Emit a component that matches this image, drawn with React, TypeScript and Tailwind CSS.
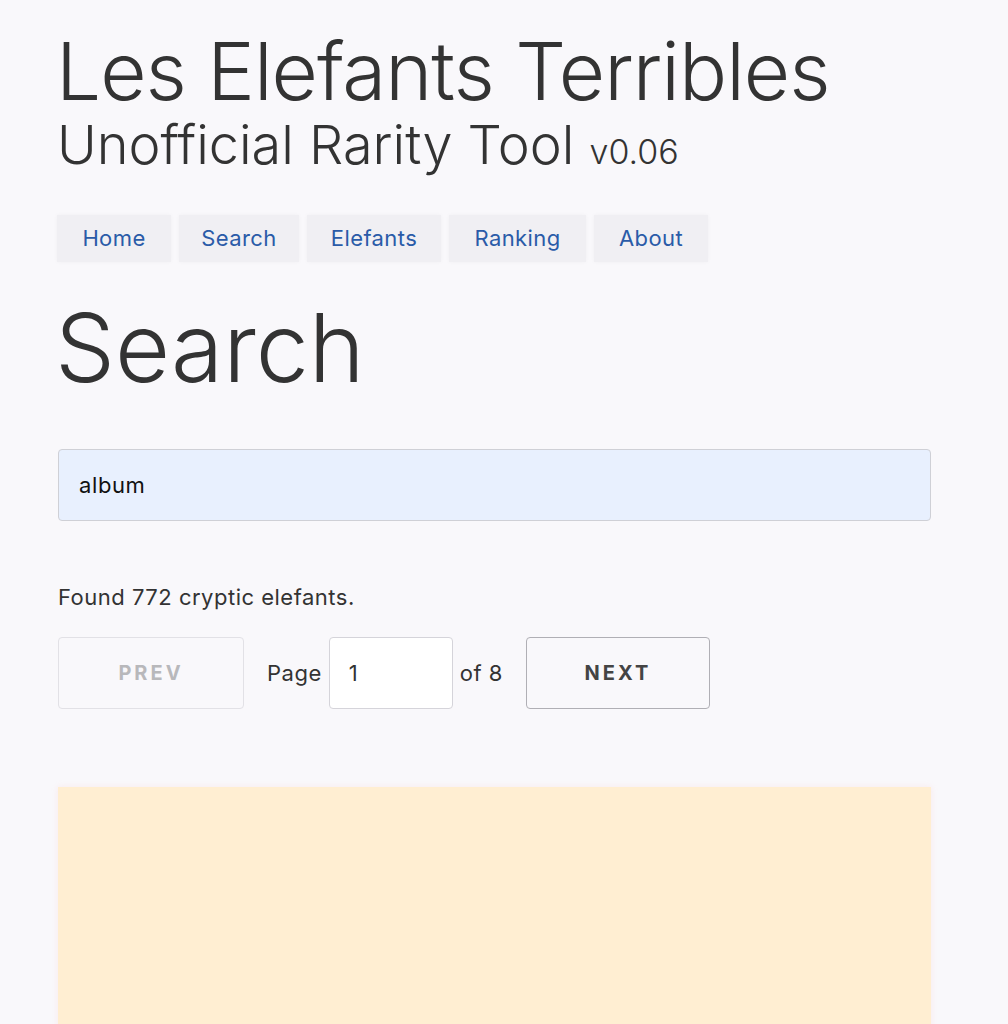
import React from 'react'

const navItems = [
  { label: 'Home', w: 'w-[114px]' },
  { label: 'Search', w: 'w-[120px]' },
  { label: 'Elefants', w: 'w-[134px]' },
  { label: 'Ranking', w: 'w-[137px]' },
  { label: 'About', w: 'w-[114px]' },
]

const App: React.FC = () => {
  return (
    <div className="min-h-screen bg-[#f9f8fb] text-[#333] font-['Inter',sans-serif]">
      <div className="w-[873px] ml-[58px] pt-[27px]">
        {/* Header */}
        <h1 className="text-[80px] font-light leading-[88px] tracking-[-1px] -ml-[2px]">Les Elefants Terribles</h1>
        <h2 className="text-[54px] font-light leading-[60px] -ml-[1px]">
          Unofficial Rarity Tool <span className="text-[34px]">v0.06</span>
        </h2>

        {/* Nav */}
        <nav className="flex gap-[8px] mt-[33px] -ml-[1px]">
          {navItems.map((item) => (
            <a
              key={item.label}
              href="#"
              className={`${item.w} h-[47px] flex items-center justify-center bg-[#f0eff3] shadow-[0_0_4px_rgba(0,0,0,0.04)] text-[22px] tracking-[0.4px] text-[#2a5ba8]`}
            >
              {item.label}
            </a>
          ))}
        </nav>

        <h1 className="text-[95px] font-light leading-[120px] mt-[26px] -ml-[3px]">Search</h1>

        {/* Search box */}
        <input
          type="text"
          defaultValue="album"
          className="mt-[41px] w-full h-[72px] px-[20px] bg-[#e8f0fe] border border-[#cfd0d6] rounded-[4px] text-[22px] tracking-[0.6px] text-[#111] outline-none"
        />

        <p className="mt-[62px] text-[22px] leading-[28px] tracking-[0.5px]">Found 772 cryptic elefants.</p>

        {/* Pager */}
        <div className="flex items-center mt-[26px]">
          <button className="w-[186px] h-[72px] border border-[#e2e1e6] rounded-[4px] text-[20px] font-bold tracking-[3px] text-[#b8b8bb]">
            PREV
          </button>
          <span className="ml-[23px] text-[22px] tracking-[0.5px]">Page</span>
          <input
            type="text"
            defaultValue="1"
            className="ml-[7px] w-[124px] h-[72px] px-[19px] bg-white border border-[#d5d4da] rounded-[4px] text-[22px] outline-none"
          />
          <span className="ml-[7px] text-[22px] tracking-[0.5px]">of 8</span>
          <button className="ml-[23px] w-[184px] h-[72px] border border-[#b0afb5] rounded-[4px] text-[20px] font-bold tracking-[3px] text-[#444]">
            NEXT
          </button>
        </div>

        {/* Results panel */}
        <div className="mt-[78px] h-[300px] bg-[#ffeed2] shadow-[0_0_6px_rgba(255,200,200,0.3)]"></div>
      </div>
    </div>
  )
}

export default App
